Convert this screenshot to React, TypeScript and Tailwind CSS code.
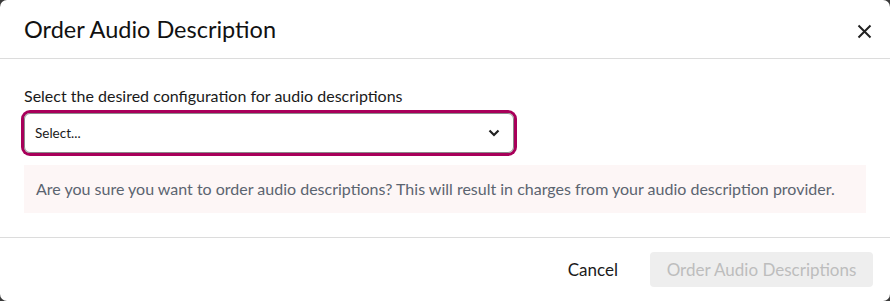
import React from 'react';

export default function App() {
  return (
    <div className="w-[890px] h-[301px] bg-[#3a3a3a]" style={{ fontFamily: 'Lato, "Liberation Sans", sans-serif' }}>
      <div className="w-full h-full bg-white rounded-[7px] flex flex-col overflow-hidden">
        {/* Header */}
        <div className="h-[59px] shrink-0 flex items-center justify-between pl-6 pr-[18px] border-b border-[#dcdcdc]">
          <h1 className="text-[23.5px] text-[#111] leading-none pt-[1px]">Order Audio Description</h1>
          <button className="w-[16px] h-[16px] flex items-center justify-center text-[#222] mt-[5px]" aria-label="Close">
            <svg width="15" height="15" viewBox="0 0 15 15" fill="none" stroke="currentColor" strokeWidth="2">
              <path d="M1.5 1.5 L13.5 13.5 M13.5 1.5 L1.5 13.5" />
            </svg>
          </button>
        </div>

        {/* Body */}
        <div className="px-6 pt-[27px] pb-6 border-b border-[#dcdcdc]">
          <label className="block text-[16px] leading-5 text-[#1a1a1a] mb-[7px]">
            Select the desired configuration for audio descriptions
          </label>
          <div className="w-[490px] h-[40px] rounded-[6px] border border-[#8a8a8a] ring-[3px] ring-[#a8005a] flex items-center justify-between pl-[10px] pr-[13px] text-[13.5px] text-[#1a1a1a]">
            <span>Select...</span>
            <svg width="12" height="8" viewBox="0 0 12 8" fill="none" stroke="#222" strokeWidth="2.2">
              <path d="M1.5 1.5 L6 6 L10.5 1.5" />
            </svg>
          </div>
          <div className="mt-[12px] h-[48px] bg-[#fdf6f6] px-3 flex items-center text-[16px] text-[#5b6470]">
            Are you sure you want to order audio descriptions? This will result in charges from your audio description provider.
          </div>
        </div>

        {/* Footer */}
        <div className="flex-1 flex items-center justify-end gap-8 pr-[17px]">
          <button className="text-[17px] text-[#1a1a1a]">Cancel</button>
          <button className="h-[35px] w-[223px] rounded-[4px] bg-[#eeeeee] text-[17px] text-[#bdbdbd]" disabled>
            Order Audio Descriptions
          </button>
        </div>
      </div>
    </div>
  );
}
